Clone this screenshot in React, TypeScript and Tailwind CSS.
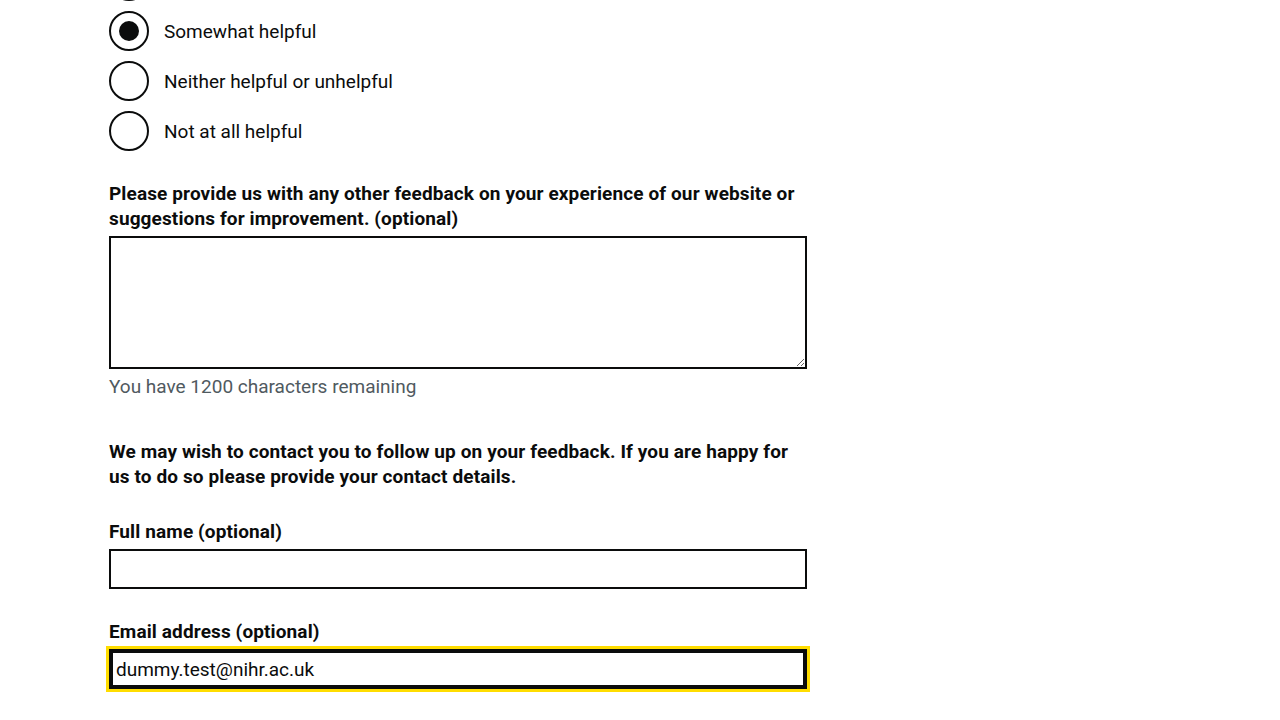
import React from "react";

const options = [
  { label: "Very helpful", checked: false },
  { label: "Somewhat helpful", checked: true },
  { label: "Neither helpful or unhelpful", checked: false },
  { label: "Not at all helpful", checked: false },
];

function Radio({ label, checked }: { label: string; checked: boolean }) {
  return (
    <div className="flex items-center h-[40px] mb-[10px]">
      <div className="w-[40px] h-[40px] rounded-full border-2 border-[#0b0c0c] flex items-center justify-center shrink-0 bg-white">
        {checked && <div className="w-[20px] h-[20px] rounded-full bg-[#0b0c0c]" />}
      </div>
      <span className="pl-[15px] text-[19px] leading-[25px] text-[#0b0c0c]">{label}</span>
    </div>
  );
}

export default function App() {
  return (
    <div className="min-h-screen bg-white font-['Roboto',sans-serif] text-[#0b0c0c] overflow-hidden">
      <div className="ml-[109px] w-[698px] -mt-[39px]">
        <div>
          {options.map((o) => (
            <Radio key={o.label} label={o.label} checked={o.checked} />
          ))}
        </div>

        <div className="mt-[30px]">
          <label className="block font-bold text-[19px] leading-[25px] tracking-[0.12px] mb-[5px]">
            Please provide us with any other feedback on your experience of our website or suggestions for improvement. (optional)
          </label>
          <textarea
            className="block w-[698px] h-[133px] border-2 border-[#0b0c0c] p-[5px] text-[19px] leading-[25px] bg-white outline-none"
            defaultValue=""
          />
          <div className="mt-[5px] text-[19px] leading-[25px] text-[#505a5f]">
            You have 1200 characters remaining
          </div>
        </div>

        <p className="mt-[40px] font-bold text-[19px] leading-[25px] tracking-[0.12px]">
          We may wish to contact you to follow up on your feedback. If you are happy for us to do so please provide your contact details.
        </p>

        <div className="mt-[30px]">
          <label className="block font-bold text-[19px] leading-[25px] tracking-[0.12px] mb-[5px]">Full name (optional)</label>
          <input
            type="text"
            readOnly
            className="block w-[698px] h-[40px] border-2 border-[#0b0c0c] px-[5px] text-[19px] bg-white outline-none"
          />
        </div>

        <div className="mt-[30px]">
          <label className="block font-bold text-[19px] leading-[25px] tracking-[0.12px] mb-[5px]">Email address (optional)</label>
          <input
            type="text"
            readOnly
            value="dummy.test@nihr.ac.uk"
            className="block w-[698px] h-[40px] border-2 border-[#0b0c0c] px-[5px] text-[19px] text-[#0b0c0c] bg-white outline-[3px] outline-solid outline-[#ffdd00] shadow-[inset_0_0_0_2px_#0b0c0c]"
          />
        </div>
      </div>
    </div>
  );
}
